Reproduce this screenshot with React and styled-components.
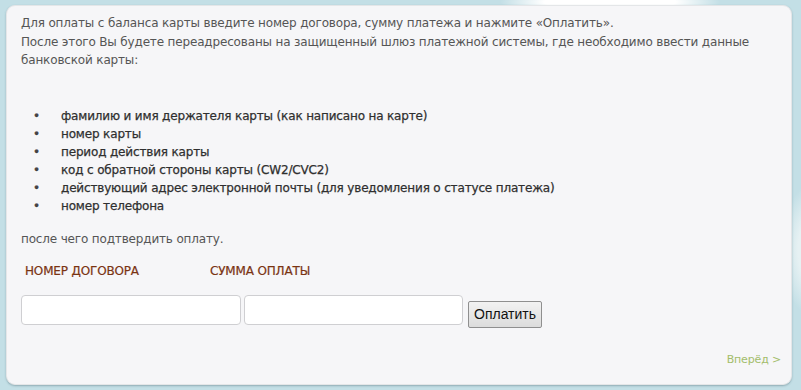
import styled, { createGlobalStyle } from "styled-components";

const GlobalStyle = createGlobalStyle`
  html, body {
    margin: 0;
    padding: 0;
  }
  body {
    width: 801px;
    height: 390px;
    overflow: hidden;
    font-family: "DejaVu Sans", Tahoma, sans-serif;
    background:
      radial-gradient(ellipse 110px 14px at 610px 2px, #ffffff 60%, rgba(255,255,255,0) 100%),
      radial-gradient(ellipse 40px 70px at 820px 250px, #e6f1f3 55%, rgba(230,241,243,0) 100%),
      #c3dfe6;
  }
`;

const items = [
  "фамилию и имя держателя карты (как написано на карте)",
  "номер карты",
  "период действия карты",
  "код с обратной стороны карты (CW2/CVC2)",
  "действующий адрес электронной почты (для уведомления о статусе платежа)",
  "номер телефона",
];

const App = () => {
  return (
    <>
      <GlobalStyle />
      <Page>
        <Panel>
          <Intro>
            Для оплаты с баланса карты введите номер договора, сумму платежа и
            нажмите «Оплатить».
            <br />
            После этого Вы будете переадресованы на защищенный шлюз платежной
            системы, где необходимо ввести данные банковской карты:
          </Intro>

          <List>
            {items.map((item) => (
              <li key={item}>{item}</li>
            ))}
          </List>

          <Outro>после чего подтвердить оплату.</Outro>

          <Labels>
            <Label width={185}>НОМЕР ДОГОВОРА</Label>
            <Label>СУММА ОПЛАТЫ</Label>
          </Labels>

          <FormRow>
            <Field type="text" />
            <Field type="text" />
            <PayButton type="button">Оплатить</PayButton>
          </FormRow>

          <Footer>
            <NextLink href="#">Вперёд &gt;</NextLink>
          </Footer>
        </Panel>
      </Page>
    </>
  );
};

const Page = styled.div`
  padding: 5px 9px 5px 6px;
`;

const Panel = styled.div`
  box-sizing: border-box;
  height: 380px;
  background: #f6f6f8;
  border: 1px solid #e4e6e8;
  border-radius: 9px;
  box-shadow: 0 1px 2px rgba(80, 110, 120, 0.45);
  padding: 8px 10px 0 14px;
  color: #555;
  font-size: 12px;
  letter-spacing: -0.16px;
`;

const Intro = styled.p`
  margin: 0;
  line-height: 18.5px;
  width: 740px;
`;

const List = styled.ul`
  margin: 37px 0 0 0;
  padding: 0 0 0 40px;
  list-style: none;
  color: #2f2f2f;
  line-height: 18px;
  -webkit-text-stroke: 0.25px #2f2f2f;

  li {
    position: relative;
  }

  li::before {
    content: "•";
    position: absolute;
    left: -28px;
    color: #444;
  }
`;

const Outro = styled.p`
  margin: 15px 0 0 0;
  line-height: 18px;
`;

const Labels = styled.div`
  display: flex;
  margin: 14px 0 0 4px;
  line-height: 18px;
`;

const Label = styled.span`
  width: ${(p) => (p.width ? `${p.width}px` : "auto")};
  color: #7a3312;
  font-size: 12px;
  -webkit-text-stroke: 0.2px #7a3312;
`;

const FormRow = styled.div`
  display: flex;
  align-items: flex-start;
  gap: 3px;
  margin-top: 15px;
`;

const Field = styled.input`
  box-sizing: border-box;
  width: 220px;
  height: 30px;
  border: 1px solid #cfcfd2;
  border-radius: 4px;
  background: #fff;
  outline: none;
  &:last-of-type {
    width: 219px;
  }
`;

const PayButton = styled.button`
  box-sizing: border-box;
  margin: 6px 0 0 2px;
  height: 27px;
  padding: 0 5px;
  font-family: "Liberation Sans", Arial, sans-serif;
  font-size: 14px;
  letter-spacing: 0;
  color: #111;
  background: linear-gradient(#f2f2f2, #dcdcdc);
  border: 1px solid #8f8f8f;
  border-radius: 2px;
`;

const Footer = styled.div`
  display: flex;
  justify-content: flex-end;
  margin-top: 25px;
  padding-right: 0;
`;

const NextLink = styled.a`
  color: #a3bd6b;
  font-size: 11px;
  text-decoration: none;
`;

export default App;
